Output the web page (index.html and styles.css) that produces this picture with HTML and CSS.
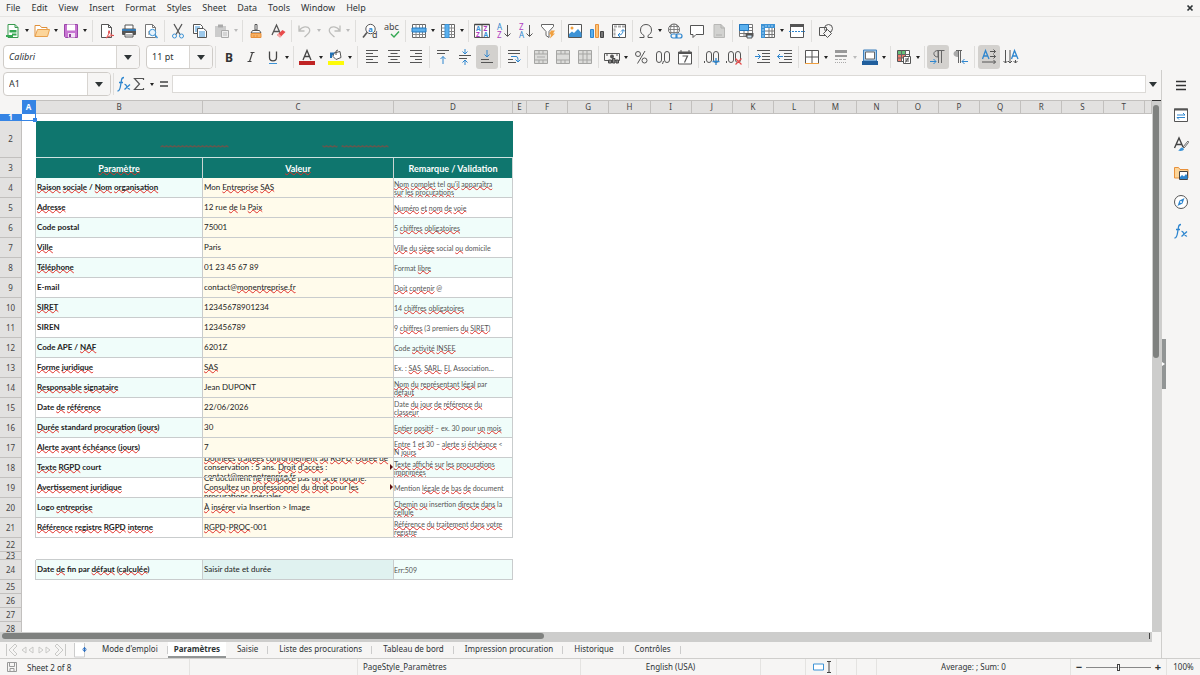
FILE: index.html
```html
<!DOCTYPE html>
<html lang="en">
<head>
<meta charset="utf-8">
<title>Paramètres</title>
<link rel="stylesheet" href="styles.css">
</head>
<body>
<div class="app">
<nav class="menubar">
<button>File</button><button>Edit</button><button>View</button><button>Insert</button><button>Format</button><button>Styles</button><button>Sheet</button><button>Data</button><button>Tools</button><button>Window</button><button>Help</button>
<button class="close" aria-label="Close"><svg viewBox="0 0 8 8" width="8" height="8"><path d="M1.500 1.500l5 5M6.500 1.500l-5 5" stroke="#2e3436" stroke-width="1.700"/></svg></button>
</nav>
<div class="toolbar" role="toolbar" aria-label="Standard">
<button class="tb dd" aria-label="New"><svg class="ic" viewBox="0 0 16 16"><path d="M3 1.500h7l3 3v10H3z" fill="#fff" stroke="#3a9a50"/><path d="M10 1.500v3h3" stroke="#3a9a50"/><path d="M4.500 7h7v2.500h-7zM7 10.500h4.500v2H7z" fill="#35a853"/><path d="M1 13h7" stroke="#35a853" stroke-width="2"/></svg></button>
<button class="tb dd" aria-label="Open"><svg class="ic" viewBox="0 0 16 16"><path d="M1 13.500v-11h5l1.500 2H13V7" fill="#fff" stroke="#e0903a"/><path d="M1 13.500L3.500 6.500H15.500L13.500 13.500z" fill="#fcd59a" stroke="#e8a04c"/></svg></button>
<button class="tb dd" aria-label="Save"><svg class="ic" viewBox="0 0 16 16"><path d="M1.500 1.500h13v13h-12l-1-1z" fill="#c774d2" stroke="#9a45a8"/><path d="M4 1.500h8v6H4z" fill="#fff"/><path d="M5 10h7v4.500H5z" fill="#f3e4f5"/><path d="M6 11h2v3H6z" fill="#8e3e9d"/></svg></button>
<span class="sep wide"></span>
<button class="tb" aria-label="Export as PDF"><svg class="ic" viewBox="0 0 16 16"><path d="M2.500 1.500h7l3 3v10h-10z" fill="#fff" stroke="#555"/><path d="M9.500 1.500v3h3" stroke="#555"/><path d="M7 15c2-2 3-4 2.500-6.500 0-1.500 1.500-1 1 .500 0 2 2 3.500 4.500 3.500-3 0-5 .500-8 2.500z" fill="#fff" stroke="#e04a4a"/></svg></button>
<button class="tb" aria-label="Print"><svg class="ic" viewBox="0 0 16 16"><path d="M4 6V2h8v4" fill="#fff" stroke="#555"/><rect x="1" y="5.500" width="14" height="6.500" rx="1" fill="#555"/><path d="M1 7h14" stroke="#2e86cf" stroke-width="1.500"/><path d="M4 9.500h8v4.500H4z" fill="#fff" stroke="#555"/><path d="M5 12h6" stroke="#777"/></svg></button>
<button class="tb" aria-label="Print preview"><svg class="ic" viewBox="0 0 16 16"><path d="M2.500 1.500h7l3 3v10h-10z" fill="#fff" stroke="#777"/><path d="M9.500 1.500v3h3M5 9h2M5 11h2" stroke="#777"/><circle cx="9.500" cy="9.500" r="3.200" fill="#e9f4fc" stroke="#3d93d6"/><path d="M12 12l2.500 3" stroke="#3d93d6" stroke-width="1.400"/></svg></button>
<span class="sep"></span>
<button class="tb" aria-label="Cut"><svg class="ic" viewBox="0 0 16 16"><path d="M4 1l6 10.500M12 1L6 11.500" stroke="#555" stroke-width="1.300"/><circle cx="4.500" cy="13" r="2" stroke="#3d93d6"/><circle cx="11.500" cy="13" r="2" stroke="#3d93d6"/></svg></button>
<button class="tb" aria-label="Copy"><svg class="ic" viewBox="0 0 16 16"><path d="M1.500 1.500h7l2 2v7h-9z" fill="#fff" stroke="#555"/><path d="M3 4h5M3 6h5M3 8h3" stroke="#3d93d6"/><path d="M5.500 5.500h6l3 2.500v6.500h-9z" fill="#fff" stroke="#555"/><path d="M7 9h6M7 11h6M7 13h6" stroke="#3d93d6"/></svg></button>
<button class="tb dd off" aria-label="Paste"><svg class="ic" viewBox="0 0 16 16"><path d="M1 3h11v11H1z" fill="#ccc"/><path d="M4 1.500h5v3H4z" fill="#aaa"/><path d="M7.500 7.500h7v7h-7z" fill="#eee" stroke="#aaa"/><path d="M9 10h4M9 12h4" stroke="#bbb"/></svg></button>
<span class="sep"></span>
<button class="tb" aria-label="Clone formatting"><svg class="ic" viewBox="0 0 16 16"><path d="M7 1.500h2V7H7z" fill="#fff" stroke="#555"/><path d="M4.500 7.500h7L13 10H3z" fill="#fff" stroke="#555"/><path d="M3 10.500h10v4H3z" fill="#f7b266" stroke="#e8903a"/><path d="M6 12v2M9 12v2" stroke="#e8903a"/></svg></button>
<button class="tb" aria-label="Clear formatting"><svg class="ic" viewBox="0 0 16 16"><path d="M2 12L6.500 2 11 12M4 8.500h6" stroke="#555" stroke-width="1.300"/><path d="M7 12l5.500-5 3 2-5.500 5.500z" fill="#e84b4b"/><path d="M7 12l3 2.500 1.500-1.300-3-2.600z" fill="#f7a8a8"/></svg></button>
<span class="sep"></span>
<button class="tb dd off" aria-label="Undo"><svg class="ic" viewBox="0 0 16 16"><path d="M2 2.500V8h5.500M2.500 7.500C5 3 11 3 12.500 6c1 3-1 4.500-5 8" stroke="#bdbdbb" stroke-width="1.300"/></svg></button>
<button class="tb dd off" aria-label="Redo"><svg class="ic" viewBox="0 0 16 16"><path d="M14 2.500V8H8.500M13.500 7.500C11 3 5 3 3.500 6c-1 3 1 4.500 5 8" stroke="#bdbdbb" stroke-width="1.300"/></svg></button>
<span class="sep wide"></span>
<button class="tb" aria-label="Find and replace"><svg class="ic" viewBox="0 0 16 16"><circle cx="8.500" cy="6" r="4.700" fill="#fff" stroke="#555"/><path d="M5 9.500l-4 5" stroke="#555" stroke-width="1.600"/><text x="6.200" y="8.500" font-size="7.500" fill="#2e86cf" font-weight="bold">a</text><text x="10" y="15" font-size="9" fill="#444">d</text></svg></button>
<button class="tb" aria-label="Spelling"><svg class="ic" viewBox="0 0 16 16"><text x="0" y="7" font-size="9" fill="#444">abc</text><path d="M7 11l3 3 5-5.500" stroke="#35a853" stroke-width="1.400"/></svg></button>
<span class="sep"></span>
<button class="tb dd" aria-label="Row"><svg class="ic" viewBox="0 0 16 16"><path d="M1.500 1.500h13v13h-13z" fill="#fff" stroke="#666"/><path d="M5 1.500v13M8.500 1.500v13M11.500 1.500v13M1.500 11.500h13" stroke="#888"/><path d="M1 5h14v4H1z" fill="#5ab0ee" stroke="#2176bd"/></svg></button>
<button class="tb dd" aria-label="Column"><svg class="ic" viewBox="0 0 16 16"><path d="M1.500 1.500h13v13h-13z" fill="#fff" stroke="#666"/><path d="M1.500 5h13M1.500 8.500h13M1.500 11.500h13M11.500 1.500v13" stroke="#888"/><path d="M5 1.500h4v13H5z" fill="#5ab0ee" stroke="#3d93d6"/></svg></button>
<span class="sep"></span>
<button class="tb" aria-label="Sort"><svg class="ic" viewBox="0 0 16 16"><path d="M.500 1.500h15v13H.500zM8 1.500v13" fill="#fff" stroke="#555"/><path d="M.500 1.500h15" stroke="#444" stroke-width="1.500"/><g font-size="6.500" font-weight="bold"><text x="2" y="8" fill="#3d93d6">A</text><text x="2" y="14" fill="#b03cc0">Z</text><text x="9.500" y="8" fill="#b03cc0">Z</text><text x="9.500" y="14" fill="#3d93d6">A</text></g></svg></button>
<button class="tb" aria-label="Sort ascending"><svg class="ic" viewBox="0 0 16 16"><g font-size="8"><text x="1" y="7" fill="#2e86cf">A</text><text x="1" y="15" fill="#b03cc0">Z</text></g><path d="M11.500 2v11M8.500 10.500l3 3 3-3" stroke="#555"/></svg></button>
<button class="tb" aria-label="Sort descending"><svg class="ic" viewBox="0 0 16 16"><g font-size="8"><text x="1" y="7" fill="#b03cc0">Z</text><text x="1" y="15" fill="#2e86cf">A</text></g><path d="M11.500 2v11M8.500 10.500l3 3 3-3" stroke="#555"/></svg></button>
<button class="tb" aria-label="AutoFilter"><svg class="ic" viewBox="0 0 16 16"><path d="M1.500 1.500h12v2l-4.500 5v6l-3-2v-4L1.500 3.500z" fill="#fff" stroke="#666"/><path d="M11 7.500h4l-2 3h2L10 15.500l1-4H9z" fill="#f0a040"/></svg></button>
<span class="sep"></span>
<button class="tb" aria-label="Insert image"><svg class="ic" viewBox="0 0 16 16"><path d="M1.500 1.500h13v13h-13z" fill="#fff" stroke="#555"/><circle cx="5" cy="5" r="1.500" fill="#f0a040"/><path d="M2 14v-3l3-2.500 2 1.500 4-4 3.500 4v4z" fill="#3d93d6"/></svg></button>
<button class="tb" aria-label="Insert chart"><svg class="ic" viewBox="0 0 16 16"><path d="M1.500 6.500h3v8h-3z" fill="#5ab0ee" stroke="#2e86cf"/><path d="M6.500 1.500h3v13h-3z" fill="#fbc47a" stroke="#e8903a"/><path d="M11.500 8.500h3v6h-3z" fill="#777" stroke="#444"/></svg></button>
<button class="tb" aria-label="Insert pivot table"><svg class="ic" viewBox="0 0 16 16"><path d="M1.500 1.500h13v13h-13z" fill="#fff" stroke="#555"/><path d="M3 3.500h11" stroke="#aaa" stroke-width="2" stroke-dasharray="3 1"/><path d="M3.500 5.500V14" stroke="#aaa" stroke-width="2" stroke-dasharray="3 1"/><path d="M7 12c4 0 5-2 5-5M10 8.500l2-2 2 2M9 10l-2 2 2 2" stroke="#2e86cf"/></svg></button>
<span class="sep"></span>
<button class="tb dd" aria-label="Special character"><svg class="ic" viewBox="0 0 16 16"><path d="M1.500 14.500H6v-2C3.500 11 2.500 9.500 2.500 7c0-3.500 2.300-5.500 5.500-5.500s5.500 2 5.500 5.500c0 2.500-1 4-3.500 5.500v2h4.500" stroke="#555"/></svg></button>
<button class="tb" aria-label="Insert hyperlink"><svg class="ic" viewBox="0 0 16 16"><circle cx="7" cy="6.500" r="5.500" fill="#fff" stroke="#666"/><path d="M1.500 6.500h11M7 1v11M3 3.500h8M3 9.500h8M5 1.500c-2 3-2 7 0 10M9 1.500c2 3 2 7 0 10" stroke="#777" stroke-width=".900"/><path d="M4 10.500h11.500v5H4z" fill="#f6f5f4"/><rect x="4" y="11" width="6" height="4" rx="2" stroke="#2e86cf" stroke-width="1.200"/><rect x="9" y="11" width="6" height="4" rx="2" stroke="#2e86cf" stroke-width="1.200"/></svg></button>
<button class="tb" aria-label="Insert comment"><svg class="ic" viewBox="0 0 16 16"><path d="M1.500 2.500h13v9H7l-3 3v-3H1.500z" fill="#fff" stroke="#555"/></svg></button>
<button class="tb off" aria-label="Headers and footers"><svg class="ic" viewBox="0 0 16 16"><path d="M3 1.500h7l3.500 3.500v9.500H3z" fill="#d2d2d0" stroke="#b8b8b6"/><path d="M10 1.500V5h3.500M5 12h6" stroke="#b0b0ae"/></svg></button>
<span class="sep"></span>
<button class="tb" aria-label="Define print area"><svg class="ic" viewBox="0 0 16 16"><path d="M1.500 1.500h13v12h-13z" fill="#fff" stroke="#777"/><path d="M1.500 4.500h13M1.500 7.500h13M1.500 10.500h13M6 1v12M10 1v12" stroke="#777"/><path d="M1.500 1.500h9v6h-9z" fill="#5ab0ee" stroke="#2176bd"/><rect x="7.500" y="10" width="8" height="3.500" fill="#555"/><path d="M9 12h5v3H9z" fill="#cde5f7" stroke="#555"/></svg></button>
<button class="tb dd" aria-label="Freeze rows and columns"><svg class="ic" viewBox="0 0 16 16"><path d="M1.500 1.500h13v13h-13z" fill="#fff" stroke="#666"/><path d="M1.500 8h13M1.500 11.500h13M9 1.500v13M12 1.500v13" stroke="#777"/><path d="M1 1h14v4H5v10H1z" fill="#3d93d6"/><path d="M3 3v11M5 3h9" stroke="#a9d3f3" stroke-dasharray="2 1"/></svg></button>
<button class="tb" aria-label="Split window"><svg class="ic" viewBox="0 0 16 16"><path d="M1.500 2.500h13v12h-13z" fill="#fff" stroke="#555"/><path d="M1 2.500h14" stroke="#555" stroke-width="3"/><path d="M0 8.500h16" stroke="#2e86cf" stroke-dasharray="2 1"/></svg></button>
<span class="sep wide"></span>
<button class="tb" aria-label="Show draw functions"><svg class="ic" viewBox="0 0 16 16"><path d="M1.500 4.500h7v8h-7z" stroke="#555"/><circle cx="10.500" cy="5.500" r="4" stroke="#555"/><path d="M9.500 6.500l4 4-4 4-4-4z" fill="#f6f5f4" stroke="#555"/></svg></button>
</div>
<div class="toolbar format" role="toolbar" aria-label="Formatting">
<div class="combo font"><input class="italic" aria-label="Font name" value="Calibri"><button aria-label="Choose font"></button></div>
<div class="combo size"><input aria-label="Font size" value="11 pt"><button aria-label="Choose size"></button></div>
<span class="sep"></span>
<button class="tb" aria-label="Bold"><svg class="ic" viewBox="0 0 16 16"><text x="4" y="12.500" font-size="12" font-weight="bold" fill="#333">B</text></svg></button>
<button class="tb" aria-label="Italic"><svg class="ic" viewBox="0 0 16 16"><path d="M7.500 3.500h4M4.500 12.500h4M9.500 3.500l-3 9" stroke="#444" stroke-width="1.200"/></svg></button>
<button class="tb dd" aria-label="Underline"><svg class="ic" viewBox="0 0 16 16"><path d="M4.500 2.500v6c0 4.500 7 4.500 7 0v-6" stroke="#444" stroke-width="1.300"/><path d="M4 14.500h8" stroke="#3d93d6"/></svg></button>
<span class="sep"></span>
<button class="tb dd" aria-label="Font color"><svg class="ic" viewBox="0 0 16 16"><path d="M4 11L8 1.500 12 11M5.500 7.500h5" stroke="#444" stroke-width="1.300"/><path d="M0 12h16v4H0z" fill="#c02424"/></svg></button>
<button class="tb dd" aria-label="Highlighting color"><svg class="ic" viewBox="0 0 16 16"><path d="M6 4l6-1.500 1 6-5 2-3-3z" fill="#fff" stroke="#555"/><path d="M8 6V2l2-1" stroke="#555"/><path d="M2 9V3.500h5L4 7v2z" fill="#2372b5"/><path d="M0 12h16v4H0z" fill="#fdfb08"/></svg></button>
<span class="sep wide"></span>
<button class="tb" aria-label="Align left"><svg class="ic" viewBox="0 0 16 16"><path d="M2 1.500h12M2 4.500h7M2 7.500h12M2 10.500h7M2 13.500h12" stroke="#555"/></svg></button>
<button class="tb" aria-label="Center horizontally"><svg class="ic" viewBox="0 0 16 16"><path d="M2 1.500h12M4.500 4.500h7M2 7.500h12M4.500 10.500h7M2 13.500h12" stroke="#555"/></svg></button>
<button class="tb" aria-label="Align right"><svg class="ic" viewBox="0 0 16 16"><path d="M2 1.500h12M7 4.500h7M2 7.500h12M7 10.500h7M2 13.500h12" stroke="#555"/></svg></button>
<span class="sep"></span>
<button class="tb" aria-label="Align top"><svg class="ic" viewBox="0 0 16 16"><path d="M2 1.500h12M2 4.500h8" stroke="#555"/><path d="M8 15V7.500M5.500 10L8 7.500l2.500 2.500" stroke="#2e86cf"/></svg></button>
<button class="tb" aria-label="Center vertically"><svg class="ic" viewBox="0 0 16 16"><path d="M2 6.500h12M2 9.500h8" stroke="#555"/><path d="M8 0v5M5.500 2.500L8 5l2.500-2.500M8 16v-5M5.500 13.500L8 11l2.500 2.500" stroke="#2e86cf"/></svg></button>
<button class="tb on" aria-label="Align bottom"><svg class="ic" viewBox="0 0 16 16"><path d="M2 10.500h8M2 13.500h12" stroke="#555"/><path d="M8 1v7M5.500 5.500L8 8l2.500-2.500" stroke="#2e86cf"/></svg></button>
<span class="sep"></span>
<button class="tb" aria-label="Wrap text"><svg class="ic" viewBox="0 0 16 16"><path d="M2 1.500h12M2 4.500h12M2 10.500h5M2 13.500h8" stroke="#555"/><path d="M5 7.500h5c2 0 2 2 2 5M9.500 10.500l2.500 2.500 2.500-2.500" stroke="#2e86cf"/></svg></button>
<span class="sep"></span>
<button class="tb off" aria-label="Merge and center"><svg class="ic" viewBox="0 0 16 16"><path d="M1.500 1.500h13v13h-13zM1.500 5h13M1.500 11h13M6 1.500V5M10 1.500V5M6 11v3.500M10 11v3.500" fill="#dcdcda" stroke="#a5a5a3"/><path d="M4 8h8" stroke="#aaa"/></svg></button>
<button class="tb off" aria-label="Merge cells"><svg class="ic" viewBox="0 0 16 16"><path d="M1.500 1.500h13v13h-13zM1.500 5h13M1.500 11h13M6 1.500V5M10 1.500V5M6 11v3.500M10 11v3.500" fill="#dcdcda" stroke="#a5a5a3"/></svg></button>
<button class="tb off" aria-label="Unmerge cells"><svg class="ic" viewBox="0 0 16 16"><path d="M1.500 1.500h13v13h-13zM1.500 5h13M1.500 11h13M6 1.500v13M10 1.500v13" fill="#dcdcda" stroke="#a5a5a3"/></svg></button>
<span class="sep"></span>
<button class="tb dd" aria-label="Format as currency"><svg class="ic" viewBox="0 0 16 16"><path d="M.500 4.500h15v7H.500z" stroke="#555"/><path d="M2 6h2M12 6h2" stroke="#555"/><circle cx="8" cy="7.500" r="2" fill="#555"/><path d="M4.500 14v-3h3v3zM8.500 14V9.500h2.500V14zM12 14v-3h2.500v3z" fill="#888" stroke="#444"/></svg></button>
<button class="tb" aria-label="Format as percent"><svg class="ic" viewBox="0 0 16 16"><circle cx="5" cy="5" r="2.500" stroke="#555"/><circle cx="11.500" cy="11.500" r="2.500" stroke="#555"/><path d="M12 2L4.500 14.500" stroke="#555"/></svg></button>
<button class="tb" aria-label="Format as number"><svg class="ic" viewBox="0 0 16 16"><rect x="1.500" y="2.500" width="5" height="11" rx="2.500" stroke="#555"/><rect x="9.500" y="2.500" width="5" height="11" rx="2.500" stroke="#555"/><path d="M8.500 12l-1 3" stroke="#555"/></svg></button>
<button class="tb" aria-label="Format as date"><svg class="ic" viewBox="0 0 16 16"><path d="M1.500 3h13v12h-13z" fill="#fff" stroke="#555"/><path d="M1 4h14" stroke="#555" stroke-width="2"/><path d="M4 1v3M12 1v3" stroke="#555"/><path d="M5.500 7h5l-3 6.500" stroke="#555" stroke-width="1.200"/></svg></button>
<span class="sep"></span>
<button class="tb" aria-label="Add decimal place"><svg class="ic" viewBox="0 0 16 16"><path d="M.500 12v2" stroke="#555"/><rect x="2.500" y="2.500" width="5" height="11" rx="2.500" stroke="#555"/><rect x="9.500" y="2.500" width="5" height="11" rx="2.500" stroke="#555"/><path d="M8.500 12.500h7M12 9v7" stroke="#2e86cf" stroke-width="1.300"/></svg></button>
<button class="tb" aria-label="Delete decimal place"><svg class="ic" viewBox="0 0 16 16"><path d="M.500 12v2" stroke="#555"/><rect x="2.500" y="2.500" width="5" height="11" rx="2.500" stroke="#555"/><rect x="9.500" y="2.500" width="5" height="11" rx="2.500" stroke="#555"/><path d="M9.500 9.500l6 6M15.500 9.500l-6 6" stroke="#e84b4b" stroke-width="1.200"/></svg></button>
<span class="sep wide"></span>
<button class="tb" aria-label="Increase indent"><svg class="ic" viewBox="0 0 16 16"><path d="M2 1.500h13M7 4.500h8M7 7.500h8M7 10.500h8M2 13.500h13" stroke="#555"/><path d="M0 7.500h5.500M3 5l2.500 2.500L3 10" stroke="#2e86cf"/></svg></button>
<button class="tb" aria-label="Decrease indent"><svg class="ic" viewBox="0 0 16 16"><path d="M2 1.500h13M7 4.500h8M7 7.500h8M7 10.500h8M2 13.500h13" stroke="#555"/><path d="M6 7.500H.500M3 5L.500 7.500 3 10" stroke="#2e86cf"/></svg></button>
<span class="sep"></span>
<button class="tb dd" aria-label="Borders"><svg class="ic" viewBox="0 0 16 16"><path d="M1.500 1.500h13v13h-13zM8 1.500v13M1.500 8h13" fill="#fff" stroke="#555"/><path d="M1 14.500h14" stroke="#f0a040"/></svg></button>
<button class="tb dd off" aria-label="Border style"><svg class="ic" viewBox="0 0 16 16"><path d="M2 2.500h12" stroke="#999" stroke-width="3"/><path d="M2 7h12" stroke="#999" stroke-width="2"/><path d="M2 10.500h12" stroke="#aaa" stroke-dasharray="3 1"/><path d="M2 13.500h12" stroke="#aaa" stroke-dasharray="1 1"/></svg></button>
<button class="tb dd" aria-label="Border color"><svg class="ic" viewBox="0 0 16 16"><path d="M1.500 1h13v11h-13z" fill="#a9cdec" stroke="#3d7fbd"/><path d="M3.500 3h9v7h-9z" fill="#fff" stroke="#666"/><path d="M0 12h16v4H0z" fill="#215f9d"/></svg></button>
<span class="sep"></span>
<button class="tb dd" aria-label="Conditional formatting"><svg class="ic" viewBox="0 0 16 16"><path d="M1.500 1.500h12v11h-12z" fill="#fff" stroke="#555"/><path d="M2 2h7v3H2z" fill="#67c17b"/><path d="M2 6h4v6H2zM6 6h4v3H6z" fill="#ee7b6d"/><path d="M1.500 5.500h12M1.500 9h12M5.500 1.500v11M9.500 1.500v11" stroke="#666"/><path d="M7.500 7.500h7v7h-7z" fill="#fff" stroke="#555"/><path d="M9 10h4M9 12h4M12.500 8.500l-3 5" stroke="#555"/></svg></button>
<span class="sep"></span>
<button class="tb on" aria-label="Left-to-right"><svg class="ic" viewBox="0 0 16 16"><path d="M8 1.500C2.500 1.500 2.500 8 8 8zM8.500 1.500V14M11.500 1.500V14M7 1.500h7.500" stroke="#666"/><path d="M0 12.500h6M3.500 10L6 12.500 3.500 15" stroke="#2e86cf"/></svg></button>
<button class="tb" aria-label="Right-to-left"><svg class="ic" viewBox="0 0 16 16"><path d="M6 1.500C0 1.500 0 8 6 8z" fill="#aaa"/><path d="M6.500 1.500V14M8.500 1.500V14M4 1.500h6" stroke="#666"/><path d="M16 12.500h-6M12.500 10L10 12.500l2.500 2.500" stroke="#2e86cf"/></svg></button>
<span class="sep wide"></span>
<button class="tb on" aria-label="Text direction horizontal"><svg class="ic" viewBox="0 0 16 16"><path d="M1.500 10L4.500 1.500 8 10M2.500 7h4.500" stroke="#2e86cf" stroke-width="1.300"/><path d="M9 2.500h5.500M12.500.500l2 2-2 2M9 7.500h5.500M12.500 5.500l2 2-2 2M1 13h13.500M12.500 11l2 2-2 2" stroke="#555"/></svg></button>
<button class="tb" aria-label="Text direction vertical"><svg class="ic" viewBox="0 0 16 16"><path d="M8.500 10l3-8.500L15 10M9.500 7H14" stroke="#2e86cf" stroke-width="1.300"/><path d="M2.500 1v13M.500 12l2 2 2-2M7 1v13M5 12l2 2 2-2M12.500 11v3M10.500 12l2 2 2-2" stroke="#555"/></svg></button>
</div>
<div class="workspace">
<main class="editor">
<div class="formulabar">
<div class="combo name"><input aria-label="Name box" value="A1"><button aria-label="Choose range"></button></div>
<span class="sep"></span>
<button class="fb" aria-label="Function wizard"><svg class="ic" viewBox="0 0 16 16"><path d="M1.500 15c2 0 2.500-1.500 3-5l1-6c.300-2 1-2.500 2.500-2.500M3 6.500h4M8.500 8.500c2-1 3 5.500 5.500 4.500M14 8.500l-5.500 5" stroke="#2e86cf" stroke-width="1.300"/></svg></button>
<button class="fb sum" aria-label="Select function"><svg class="ic" viewBox="0 0 16 16"><path d="M11.500 4V2.500h-9L7.500 8l-5 5.500h9V12" stroke="#555" stroke-width="1.200"/></svg></button>
<button class="fb" aria-label="Formula"><svg class="ic" viewBox="0 0 16 16"><path d="M4 6h8M4 10h8" stroke="#444" stroke-width="1.600"/></svg></button>
<input class="formula" aria-label="Input line">
<button class="more" aria-label="Expand formula bar"></button>
</div>
<div class="sheetarea">
<div class="sheet">
<table class="grid">
<colgroup><col class="c-num"><col class="c-a"><col class="c-b"><col class="c-c"><col class="c-d"><col class="c-a"><col span="15"><col class="c-last"></colgroup>
<thead><tr><th class="corner"></th><th class="sel">A</th><th>B</th><th>C</th><th>D</th><th>E</th><th>F</th><th>G</th><th>H</th><th>I</th><th>J</th><th>K</th><th>L</th><th>M</th><th>N</th><th>O</th><th>P</th><th>Q</th><th>R</th><th>S</th><th>T</th><th></th></tr></thead>
<tbody>
<tr class="h7"><th class="sel"><div>1</div></th><td class="cursor"></td><td colspan="20"></td></tr>
<tr class="h37"><th>2</th><td></td><td class="title" colspan="3"><svg class="wave" viewBox="0 0 476 36" width="100%" height="36" fill="none" aria-hidden="true"><defs><pattern id="w" width="4" height="3" patternUnits="userSpaceOnUse"><path d="M0 2.500L2 .500 4 2.500" stroke="#b23a30"/></pattern></defs><path d="M124 21h68v6h-68zM286 21h15v6h-15zM305 21h47v6h-47z" fill="none"/><path d="M124 24h68v3h-68zM286 24h15v3h-15zM305 24h47v3h-47z" fill="url(#w)"/></svg></td><td colspan="17"></td></tr>
<tr class="head"><th>3</th><td></td><td><u>Paramètre</u></td><td><u>Valeur</u></td><td>Remarque / Validation</td><td colspan="17"></td></tr>
<tr class="row"><th>4</th><td></td><td><div><p><u>Raison</u> <u>sociale</u> / <u>Nom</u> <u>organisation</u></p></div></td><td><div><p>Mon <u>Entreprise</u> <u>SAS</u></p></div></td><td><div><p><u>Nom</u> <u>complet</u> tel <u>qu'il</u> <u>apparaîtra</u><br><u>sur</u> <u>les</u> <u>procurations</u></p></div></td><td colspan="17"></td></tr>
<tr class="row"><th>5</th><td></td><td><div><p><u>Adresse</u></p></div></td><td><div><p>12 rue <u>de</u> la <u>Paix</u></p></div></td><td><div><p><u>Numéro</u> <u>et</u> <u>nom</u> <u>de</u> <u>voie</u></p></div></td><td colspan="17"></td></tr>
<tr class="row"><th>6</th><td></td><td><div><p>Code postal</p></div></td><td><div><p>75001</p></div></td><td><div><p>5 <u>chiffres</u> <u>obligatoires</u></p></div></td><td colspan="17"></td></tr>
<tr class="row"><th>7</th><td></td><td><div><p><u>Ville</u></p></div></td><td><div><p>Paris</p></div></td><td><div><p><u>Ville</u> <u>du</u> <u>siège</u> social <u>ou</u> domicile</p></div></td><td colspan="17"></td></tr>
<tr class="row"><th>8</th><td></td><td><div><p><u>Téléphone</u></p></div></td><td><div><p>01 23 45 67 89</p></div></td><td><div><p>Format <u>libre</u></p></div></td><td colspan="17"></td></tr>
<tr class="row"><th>9</th><td></td><td><div><p>E-mail</p></div></td><td><div><p>contact@<u>monentreprise.fr</u></p></div></td><td><div><p><u>Doit</u> <u>contenir</u> @</p></div></td><td colspan="17"></td></tr>
<tr class="row"><th>10</th><td></td><td><div><p><u>SIRET</u></p></div></td><td><div><p>12345678901234</p></div></td><td><div><p>14 <u>chiffres</u> <u>obligatoires</u></p></div></td><td colspan="17"></td></tr>
<tr class="row"><th>11</th><td></td><td><div><p>SIREN</p></div></td><td><div><p>123456789</p></div></td><td><div><p>9 <u>chiffres</u> (3 premiers <u>du</u> <u>SIRET</u>)</p></div></td><td colspan="17"></td></tr>
<tr class="row"><th>12</th><td></td><td><div><p>Code APE / <u>NAF</u></p></div></td><td><div><p>6201Z</p></div></td><td><div><p>Code <u>activité</u> <u>INSEE</u></p></div></td><td colspan="17"></td></tr>
<tr class="row"><th>13</th><td></td><td><div><p><u>Forme</u> <u>juridique</u></p></div></td><td><div><p><u>SAS</u></p></div></td><td><div><p>Ex. : <u>SAS</u>, <u>SARL</u>, <u>EI</u>, Association…</p></div></td><td colspan="17"></td></tr>
<tr class="row"><th>14</th><td></td><td><div><p><u>Responsable</u> <u>signataire</u></p></div></td><td><div><p>Jean DUPONT</p></div></td><td><div><p><u>Nom</u> <u>du</u> <u>représentant</u> <u>légal</u> par<br><u>défaut</u></p></div></td><td colspan="17"></td></tr>
<tr class="row"><th>15</th><td></td><td><div><p>Date <u>de</u> <u>référence</u></p></div></td><td><div><p>22/06/2026</p></div></td><td><div><p>Date <u>du</u> <u>jour</u> <u>de</u> <u>référence</u> <u>du</u><br><u>classeur</u></p></div></td><td colspan="17"></td></tr>
<tr class="row"><th>16</th><td></td><td><div><p><u>Durée</u> standard <u>procuration</u> (<u>jours</u>)</p></div></td><td><div><p>30</p></div></td><td><div><p><u>Entier</u> <u>positif</u> – ex. 30 pour <u>un</u> <u>mois</u></p></div></td><td colspan="17"></td></tr>
<tr class="row"><th>17</th><td></td><td><div><p><u>Alerte</u> <u>avant</u> <u>échéance</u> (<u>jours</u>)</p></div></td><td><div><p>7</p></div></td><td><div><p><u>Entre</u> 1 <u>et</u> 30 – <u>alerte</u> <u>si</u> <u>échéance</u> &lt;<br>N <u>jours</u></p></div></td><td colspan="17"></td></tr>
<tr class="row"><th>18</th><td></td><td><div><p><u>Texte</u> <u>RGPD</u> court</p></div></td><td class="over"><div><p><u>Données</u> <u>traitées</u> <u>conformément</u> <u>au</u> <u>RGPD</u>. <u>Durée</u> <u>de</u><br>conservation : 5 ans. <u>Droit</u> <u>d'accès</u> :<br>contact@<u>monentreprise.fr</u></p></div></td><td><div><p><u>Texte</u> <u>affiché</u> <u>sur</u> <u>les</u> <u>procurations</u><br><u>imprimées</u></p></div></td><td colspan="17"></td></tr>
<tr class="row"><th>19</th><td></td><td><div><p><u>Avertissement</u> <u>juridique</u></p></div></td><td class="over"><div><p>Ce document <u>ne</u> <u>remplace</u> pas <u>un</u> <u>acte</u> <u>notarié</u>.<br><u>Consultez</u> <u>un</u> <u>professionnel</u> <u>du</u> <u>droit</u> pour <u>les</u><br><u>procurations</u> <u>spéciales</u>.</p></div></td><td><div><p>Mention <u>légale</u> <u>de</u> <u>bas</u> <u>de</u> document</p></div></td><td colspan="17"></td></tr>
<tr class="row"><th>20</th><td></td><td><div><p>Logo <u>entreprise</u></p></div></td><td><div><p><u>À</u> <u>insérer</u> via Insertion &gt; Image</p></div></td><td><div><p><u>Chemin</u> <u>ou</u> insertion <u>directe</u> <u>dans</u> la<br><u>cellule</u></p></div></td><td colspan="17"></td></tr>
<tr class="row"><th>21</th><td></td><td><div><p><u>Référence</u> <u>registre</u> <u>RGPD</u> <u>interne</u></p></div></td><td><div><p><u>RGPD</u>-<u>PROC</u>-001</p></div></td><td><div><p><u>Référence</u> <u>du</u> <u>traitement</u> <u>dans</u> <u>votre</u><br><u>registre</u></p></div></td><td colspan="17"></td></tr>
<tr class="h14"><th>22</th><td colspan="21"></td></tr>
<tr class="h8"><th><div>23</div></th><td></td><td class="topline" colspan="3"></td><td colspan="17"></td></tr>
<tr class="row calc"><th>24</th><td></td><td><div><p>Date <u>de</u> fin par <u>défaut</u> (<u>calculée</u>)</p></div></td><td><div><p>Saisir date et durée</p></div></td><td><div><p>Err:509</p></div></td><td colspan="17"></td></tr>
<tr class="h14"><th>25</th><td colspan="21"></td></tr>
<tr class="h14"><th>26</th><td colspan="21"></td></tr>
<tr class="h14"><th>27</th><td colspan="21"></td></tr>
<tr class="h14"><th>28</th><td colspan="21"></td></tr>
</tbody>
</table>
</div>
<div class="vscroll"><div class="thumb"></div></div>
</div>
<div class="hscroll"><div class="thumb"></div><div class="grip"></div></div>
<div class="tabs">
<div class="tabnav"><svg viewBox="0 0 62 14" width="62" height="14" fill="#f6f5f4" stroke="#c9c9c7"><path d="M1.500 1v12M60.500 1v12M10 1L4 7l6 6 2-2-4-4 4-4zM52 1l6 6-6 6-2-2 4-4-4-4zM21 4l-4 3 4 3zM28 4l-4 3 4 3zM34 4l4 3-4 3zM41 4l4 3-4 3z"/></svg></div>
<button class="add" aria-label="Add sheet"><svg viewBox="0 0 14 16" width="14" height="16"><path d="M.500 1v14h10V1" fill="#fff" stroke="#ccc"/><circle cx="10.500" cy="7.500" r="1.500" fill="none" stroke="#2e6fc0"/><path d="M10.500 5v5" stroke="#2e6fc0"/></svg></button>
<button class="tab">Mode d'emploi</button><button class="tab active">Paramètres</button><button class="tab">Saisie</button><button class="tab">Liste des procurations</button><button class="tab">Tableau de bord</button><button class="tab">Impression procuration</button><button class="tab">Historique</button><button class="tab">Contrôles</button>
</div>
</main>
<aside class="sidebar">
<button class="handle" aria-label="Hide sidebar"></button>
<button aria-label="Sidebar settings"><svg class="ic" viewBox="0 0 16 16"><path d="M3 3.500h10M3 7.500h10M3 11.500h10" stroke="#333" stroke-width="1.600"/></svg></button>
<button aria-label="Properties"><svg class="ic" viewBox="0 0 16 16"><path d="M1.500 2h13v12.500h-13z" fill="#fff" stroke="#555"/><path d="M1 2.500h14" stroke="#555" stroke-width="2"/><path d="M4 8h8M10 6l2 2M4 10.500h8M6 12.500l-2-2" stroke="#2e86cf"/></svg></button>
<button aria-label="Styles"><svg class="ic" viewBox="0 0 16 16"><path d="M1.500 12L6 2l4 9M3 8.500h5.500" stroke="#444" stroke-width="1.400"/><path d="M15 5l-5 6 1 1 4.500-5.500z" fill="#fff" stroke="#666"/><path d="M5 14.500c2-.500 2-3 4.500-3l1.500 1.500c0 2-4 2.500-6 1.500z" fill="#3d93d6"/></svg></button>
<button aria-label="Gallery"><svg class="ic" viewBox="0 0 16 16"><path d="M1.500 13V2.500h4l1.500 2h8V13z" fill="#fcd59a" stroke="#e8903a"/><path d="M6.500 6.500h8v8h-8z" fill="#fff" stroke="#444"/><path d="M7 14v-2l2-2 2 1.500L13 9l1.500 2v3z" fill="#2e86cf"/></svg></button>
<button aria-label="Navigator"><svg class="ic" viewBox="0 0 16 16"><circle cx="8" cy="8" r="6.500" fill="#fff" stroke="#555"/><path d="M11.500 4L9.500 9.500 4.500 12l2-5.500z" fill="#2e86cf"/><circle cx="8" cy="8" r="1" fill="#fff"/></svg></button>
<button aria-label="Functions"><svg class="ic" viewBox="0 0 16 16"><path d="M1.500 15c2 0 2.500-1.500 3-5l1-6c.300-2 1-2.500 2.500-2.500M3 6.500h4M8.500 8.500c2-1 3 5.500 5.500 4.500M14 8.500l-5.500 5" stroke="#2e86cf" stroke-width="1.300"/></svg></button>
</aside>
</div>
<footer class="status">
<div class="s-save"><svg viewBox="0 0 12 12" width="12" height="12" fill="none" stroke="#999"><path d="M1.500 1.500h9v9h-9zM3.500 1.500v4h5v-4M4 10.500v-3h4v3"/></svg><span>Sheet 2 of 8</span></div>
<div class="s-gap"></div>
<div class="s-page">PageStyle_Paramètres</div>
<div class="s-lang">English (USA)</div>
<div class="s-ins"></div>
<div class="s-mode"><svg viewBox="0 0 20 12" width="20" height="12" fill="none"><path d="M1.500 3h10v6h-10z" fill="#fff" stroke="#3d93d6"/><path d="M15 .500h4M17 .500v11M15 11.500h4" stroke="#444"/></svg></div>
<div class="s-small"></div><div class="s-small"></div>
<div class="s-sum">Average: ; Sum: 0</div>
<div class="s-zoom"><button aria-label="Zoom out">−</button><input type="range" min="0" max="100" value="50" aria-label="Zoom"><button aria-label="Zoom in">+</button></div>
<div class="s-pct">100%</div>
</footer>
</div>
</body>
</html>
```
FILE: styles.css
```css
* { box-sizing: border-box; }
body {
  margin: 0;
  background: #f6f5f4;
  color: #2e3436;
  font: 9px/12px "Noto Sans", sans-serif;
}
button, input { font: inherit; color: inherit; margin: 0; padding: 0; border: 0; background: none; }
.app { display: flex; flex-direction: column; height: 100vh; overflow: hidden; }

.menubar { display: flex; align-items: center; gap: 11px; height: 17px; padding: 0 6px; border-bottom: 1px solid #e6e5e3; flex: none; }
.menubar .close { margin-left: auto; display: flex; }

.toolbar { display: flex; align-items: center; height: 27px; padding-left: 2px; flex: none; }
.toolbar.format { height: 26px; padding-left: 3px; }
.ic { width: 16px; height: 16px; display: block; fill: none; flex: none; overflow: visible; }
.ic text { font-family: "Noto Sans", sans-serif; }
.tb { display: flex; align-items: center; padding: 0 3px; width: 22px; height: 24px; flex: none; border-radius: 3px; }
.tb.on { background: #d3d1ce; }
.tb.dd { width: 29px; gap: 4px; padding-right: 0; }
.tb.dd::after, .fb.sum::after { content: ""; flex: none; border: 2px solid transparent; border-top: 3px solid #222; border-bottom: 0; }
.tb.dd.off::after { border-top-color: #bbb; }
.sep { width: 5px; height: 22px; flex: none; background: linear-gradient(#dfdedc, #dfdedc) center / 1px 100% no-repeat; }
.sep.wide { width: 7px; }

.combo { display: flex; height: 24px; border: 1px solid #cfccc8; border-radius: 4px; background: #fff; overflow: hidden; flex: none; }
.combo input { flex: 1; min-width: 0; padding-left: 5px; }
.combo .italic { font-style: italic; }
.combo button { width: 23px; background: #f6f5f4; border-left: 1px solid #d8d5d1; display: flex; align-items: center; justify-content: center; }
.combo button::after, .more::after { content: ""; border: 4px solid transparent; border-top: 5px solid #2e3436; border-bottom: 0; }
.combo.font { width: 137px; margin-right: 6px; }
.combo.size { width: 67px; }
.combo.name { width: 108px; }

.workspace { display: flex; flex: 1; min-height: 0; border-bottom: 1px solid #cfcecc; }
.editor { display: flex; flex-direction: column; flex: 1; min-width: 0; }
.formulabar { display: flex; align-items: center; height: 30px; padding: 0 0 2px 3px; flex: none; }
.fb { display: flex; align-items: center; width: 16px; height: 22px; }
.fb.sum { width: 24px; gap: 2px; }
.formula { flex: 1; min-width: 0; height: 18px; background: #fff; border: 1px solid #dcdad7; }
.more { width: 14px; display: flex; justify-content: center; margin-right: 1px; }

.sheetarea { display: flex; flex: 1; min-height: 0; }
.sheet { flex: 1; min-width: 0; overflow: hidden; background: #fff; }
.grid { width: 100%; table-layout: fixed; border-collapse: separate; border-spacing: 0; }
.grid th, .grid td { padding: 0; overflow: hidden; }
.c-num { width: 22px; }
.c-a { width: 14px; }
.c-b { width: 167px; }
.c-c { width: 191px; }
.c-d { width: 119px; }
.c-last { width: 7px; }
.grid th { font-size: 8px; line-height: 8px; font-weight: 400; color: #444; background: #e2e1e0; border: solid #c2c0be; border-width: 0 1px 1px 0; }
.grid thead th { height: 14px; border-top: 1px solid #c2c0be; }
.grid thead .corner { background: #f6f5f4; border-color: transparent; }
.grid th.sel, .grid thead .sel { background: #3584e4; color: #fff; font-weight: 700; border-color: #3584e4; }
.h7 { height: 7px; }
.h7 th div { height: 6px; line-height: 6px; overflow: hidden; }
.h8 { height: 8px; }
.h8 th div { height: 7px; line-height: 7px; overflow: hidden; }
.h14 { height: 14px; }
.h37 { height: 37px; }
.head, .row { height: 20px; }
.grid .cursor { position: relative; overflow: visible; border: solid #3584e4; border-width: 0 1px 1px 0; }
.cursor::after { content: ""; position: absolute; right: -2px; bottom: -2px; width: 4px; height: 4px; background: #3584e4; }
.grid .title { background: #0f766e; border-bottom: 1px solid #cfe3e1; vertical-align: top; }
.wave { display: block; }
.head td { font: 700 9px/11px Lato, sans-serif; color: #fff; text-align: center; }
.head td:nth-child(n+3):nth-child(-n+5) { background: #0f766e; border-right: 1px solid #cbd5d3; }
u { text-decoration: underline wavy #e0302a 1px; text-decoration-skip-ink: none; text-underline-offset: -1px; }
.row td:nth-child(n+3):nth-child(-n+5) { border: solid #c9cccd; border-width: 0 1px 1px 0; }
.row td:nth-child(2) { border-right: 1px solid #c9cccd; }
.row div { display: flex; flex-direction: column; justify-content: center; height: 19px; overflow: hidden; }
.row p { margin: 0; white-space: nowrap; flex: none; }
.row td { font: 8px/9px Lato, sans-serif; color: #222; }
.row td:nth-child(3) { font-weight: 700; padding-left: 1px; }
.row:nth-child(even) td:nth-child(3), .row:nth-child(even) td:nth-child(5) { background: #f0fdfa; }
.row td:nth-child(4) { background: #fffbeb; padding-left: 1px; }
.row td:nth-child(5) { font-size: 7px; line-height: 8px; color: #555; }
.row.calc td:nth-child(4) { background: #e0f2f0; }
.row .over div { position: relative; }
.row .over div::after { content: ""; position: absolute; right: 0; top: 6px; border: 3px solid transparent; border-left-color: #5c1010; border-right: 0; }
.topline { border-bottom: 1px solid #c9cccd; }

.vscroll { width: 9px; background: #cdcdcc; border-top: 1px solid #333; padding: 4px 2px 0 1px; flex: none; }
.vscroll .thumb { height: 48%; border-radius: 3px; background: #7f817f; }
.hscroll { display: flex; height: 10px; padding: 1px 2px 3px; margin-right: 9px; background: #cdcdcc; flex: none; }
.hscroll .thumb { width: 542px; height: 6px; border-radius: 3px; background: #7f817f; }
.hscroll .grip { width: 1px; background: #444; margin-left: auto; }

.tabs { display: flex; height: 16px; font-size: 8px; line-height: 14px; flex: none; }
.tabnav { width: 74px; padding: 1px 5px; }
.add { width: 17px; }
.add svg, .tabnav svg { display: block; }
.tab { padding: 0 10px 0 11px; position: relative; border-bottom: 2px solid transparent; white-space: nowrap; }
.tab:not(.active)::after { content: ""; position: absolute; right: 0; top: 4px; height: 8px; border-right: 1px solid #ccc; }
.tab.active { background: #fff; font-weight: 700; padding: 0 6px; border-bottom-color: #929595; }

.sidebar { position: relative; width: 39px; border-left: 1px solid #cfcecc; display: flex; flex-direction: column; align-items: center; gap: 13px; padding-top: 8px; flex: none; }
.handle { position: absolute; left: 0; top: 269px; width: 4px; height: 50px; background: #929595; }
.handle::after { content: ""; display: block; width: 0; border: 2px solid transparent; border-left: 3px solid #fff; border-right: 0; }

.status { display: flex; height: 16px; line-height: 15px; font-size: 8px; flex: none; }
.status > div { border-right: 1px solid #e4e3e1; flex: none; }
.s-save { width: 190px; display: flex; align-items: center; gap: 9px; padding-left: 6px; }
.s-gap { width: 168px; }
.status > .s-page { flex: 1; padding-left: 5px; }
.s-lang { width: 180px; text-align: center; }
.s-ins { width: 45px; }
.s-mode { width: 31px; display: flex; align-items: center; padding-left: 6px; }
.s-small { width: 20px; }
.s-sum { width: 194px; text-align: center; }
.s-zoom { width: 96px; display: flex; align-items: center; justify-content: center; gap: 3px; }
.s-zoom button { font-size: 11px; line-height: 12px; font-weight: 700; width: 8px; }
.s-zoom input { appearance: none; width: 65px; height: 8px; background: linear-gradient(#888, #888) center / 100% 1px no-repeat; }
.s-zoom input::-webkit-slider-thumb { appearance: none; width: 3px; height: 7px; border: 1px solid #444; background: #fff; }
.status > .s-pct { width: 33px; text-align: center; border: 0; }
```
